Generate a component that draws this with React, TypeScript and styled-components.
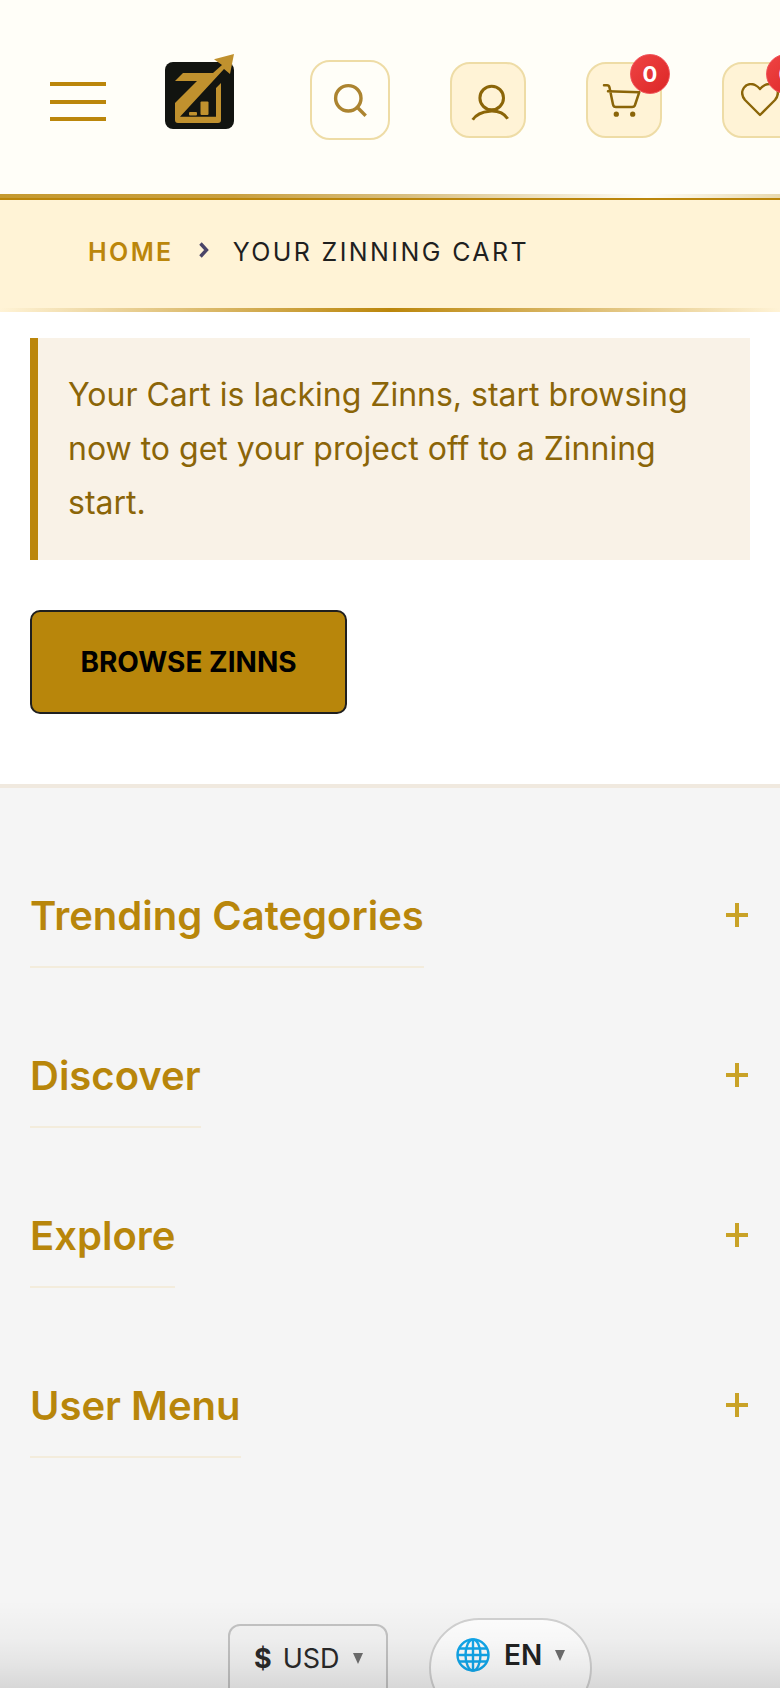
import styled, { createGlobalStyle } from "styled-components";

const GlobalStyle = createGlobalStyle`
	html, body {
		margin: 0;
		padding: 0;
		background: #fff;
		font-family: "Inter", "Liberation Sans", sans-serif;
	}
	* {
		box-sizing: border-box;
	}
`;

const Page = styled.div`
	position: relative;
	width: 780px;
	height: 1688px;
	overflow: hidden;
`;

const Header = styled.header`
	display: flex;
	align-items: center;
	height: 194px;
	padding: 6px 0 0 50px;
	background: #fffef8;
`;

const Burger = styled.div`
	display: flex;
	flex-direction: column;
	gap: 13.5px;
	flex: none;
	width: 56px;
	margin: 3px 59px 0 0;
`;

const BurgerLine = styled.span`
	display: block;
	height: 4px;
	background: #bb860b;
`;

const Logo = styled.svg`
	align-self: flex-start;
	flex: none;
	width: 70px;
	height: 76px;
	margin: 48px 75px 0 0;
`;

const IconButton = styled.div<{ $plain?: boolean }>`
	position: relative;
	flex: none;
	display: flex;
	align-items: center;
	justify-content: center;
	width: ${(p) => (p.$plain ? "80px" : "76px")};
	height: ${(p) => (p.$plain ? "80px" : "76px")};
	margin-right: 60px;
	border: 2px solid #eedca6;
	border-radius: 20px;
	background: ${(p) => (p.$plain ? "#fffef8" : "#fff3d6")};
`;

const Badge = styled.span`
	position: absolute;
	top: -10px;
	right: -10px;
	display: flex;
	align-items: center;
	justify-content: center;
	width: 40px;
	height: 40px;
	border: 1px solid #f0535a;
	border-radius: 50%;
	background: linear-gradient(135deg, #ef4444, #dc2626);
	color: #fff;
	font-size: 22px;
	font-weight: 700;
`;

const HeaderRule = styled.div`
	height: 4px;
	background: linear-gradient(90deg, #c59a30 0%, #c9a040 30%, #d8bf80 52%, #fffef8 83%, #e8d9ae 100%);
`;

const Crumbs = styled.nav`
	display: flex;
	align-items: center;
	height: 114px;
	padding: 0 0 8px 88px;
	border-top: 2px solid #bb860b;
	background: #fff3d6;
	font-size: 25px;
	letter-spacing: 2.4px;
`;

const CrumbLink = styled.span`
	color: #bb860b;
	font-weight: 600;
`;

const CrumbCurrent = styled.span`
	color: #1f1f1f;
`;

const CrumbArrow = styled.svg`
	flex: none;
	width: 14px;
	height: 18px;
	margin: -4px 22px 0 23px;
`;

const CrumbRule = styled.div`
	height: 4px;
	margin-top: -4px;
	background: linear-gradient(90deg, #fff3d6 0%, #bb860b 50%, #fff3d6 100%);
`;

const Main = styled.main`
	padding: 26px 30px 70px;
	background: #fff;
`;

const Notice = styled.div`
	padding: 30px;
	border-left: 8px solid #bb860b;
	background: #f9f2e7;
	color: #8b6508;
	font-size: 32px;
	line-height: 54px;
`;

const BrowseButton = styled.button`
	display: block;
	width: 317px;
	height: 104px;
	margin-top: 50px;
	border: 2px solid #1f1f1f;
	border-radius: 10px;
	background: #b8860b;
	color: #000;
	font-family: inherit;
	font-size: 28px;
	font-weight: 700;
`;

const Footer = styled.footer`
	height: 904px;
	padding: 104px 30px 0;
	border-top: 4px solid #f0e9df;
	background: #f5f5f5;
`;

const Section = styled.div`
	display: flex;
	align-items: flex-start;
	justify-content: space-between;
	height: 160px;

	&:last-child {
		margin-top: 10px;
	}
`;

const SectionTitle = styled.h3`
	margin: 0;
	padding-bottom: 26px;
	border-bottom: 2px solid #f3ecdc;
	color: #b8860b;
	font-size: 40px;
	font-weight: 600;
	line-height: 48px;
`;

const PlusIcon = styled.svg`
	width: 22px;
	height: 24px;
	margin: 11px 2px 0 0;
`;

const Selectors = styled.div`
	position: absolute;
	top: 1618px;
	left: 228px;
	display: flex;
	align-items: flex-start;
	gap: 41px;
`;

const CurrencySelect = styled.div`
	display: flex;
	align-items: center;
	width: 160px;
	height: 100px;
	margin-top: 6px;
	padding: 0 0 32px 24px;
	border: 2px solid #c4c4c4;
	border-radius: 12px;
	background: #f5f5f5;
	color: #2a2a2a;
	font-size: 27px;
`;

const DollarSign = styled.span`
	margin-right: 11px;
	font-weight: 700;
`;

const LanguageSelect = styled.div`
	display: flex;
	align-items: center;
	width: 163px;
	height: 100px;
	padding: 0 0 26px 25px;
	border: 2px solid #d2d2d2;
	border-radius: 50px;
	background: #fff;
	color: #222;
	font-size: 28px;
	font-weight: 600;
`;

const Globe = styled.svg`
	flex: none;
	width: 34px;
	height: 34px;
	margin-right: 14px;
`;

const Caret = styled.span`
	flex: none;
	width: 0;
	height: 0;
	margin-left: 13px;
	border-top: 11px solid #707070;
	border-left: 5.5px solid transparent;
	border-right: 5.5px solid transparent;
`;

const BottomFade = styled.div`
	position: absolute;
	left: 0;
	right: 0;
	bottom: 0;
	height: 88px;
	background: linear-gradient(
		rgba(0, 0, 0, 0) 0%,
		rgba(0, 0, 0, 0.03) 45%,
		rgba(0, 0, 0, 0.07) 74%,
		rgba(0, 0, 0, 0.12) 100%
	);
	pointer-events: none;
`;

const sections = ["Trending Categories", "Discover", "Explore", "User Menu"];

const App = () => {
	return (
		<Page>
			<GlobalStyle />
			<Header>
				<Burger>
					<BurgerLine />
					<BurgerLine />
					<BurgerLine />
				</Burger>
				<Logo viewBox="0 0 70 76">
					<rect x="0" y="8" width="69" height="67" rx="8" fill="#121410" />
					<path
						d="M69 0 L49 5.3 L57 11 L48 19 L18 19 L10 27 L32 27 L10 49 L10 66 Q10 69 13 69 L53 69 Q56 69 56 66 L56 29 L51 34 L51 62.7 L15 62.7 L59 15 L65 20 Z"
						fill="#c0912e"
					/>
					<rect x="24" y="58" width="8" height="3.500" rx="1" fill="#c0912e" />
					<rect x="35.500" y="47.500" width="8" height="13.500" rx="1" fill="#c0912e" />
				</Logo>
				<IconButton $plain>
					<svg width="36" height="36" viewBox="0 0 36 36" fill="none" stroke="#ac8430" strokeWidth="3.400">
						<circle cx="16.300" cy="16.300" r="12.700" />
						<path d="M25.500 25.500 L33.700 33.700" />
					</svg>
				</IconButton>
				<IconButton>
					<svg width="44" height="44" viewBox="0 0 44 44" fill="none" stroke="#8b6508" strokeWidth="3">
						<circle cx="25.700" cy="20" r="11.800" />
						<path d="M6.700 41.800 C13 32 34 29 41.700 40.800" />
					</svg>
				</IconButton>
				<IconButton>
					<svg width="44" height="44" viewBox="0 0 44 44" fill="none" stroke="#8b6508" strokeWidth="2.500" strokeLinecap="round" strokeLinejoin="round">
						<path d="M2 7.200 H5 Q7 7.200 7.500 9.500 L11 26.500 Q11.500 29 14 29 H30 Q32.500 29 33 27 L37.300 14.200 L6 13.200" />
						<circle cx="14.300" cy="36.200" r="1.400" fill="#8b6508" />
						<circle cx="30.700" cy="36.200" r="1.400" fill="#8b6508" />
					</svg>
					<Badge>0</Badge>
				</IconButton>
				<IconButton>
					<svg width="38" height="34" viewBox="0 0 38 34" fill="none" stroke="#8b6508" strokeWidth="2.400" strokeLinejoin="round">
						<path d="M19 32 L4 17 C-3 8 5 -2 14 2 Q17 3.500 19 6 Q21 3.500 24 2 C33 -2 41 8 34 17 Z" />
					</svg>
					<Badge>0</Badge>
				</IconButton>
			</Header>
			<HeaderRule />
			<Crumbs>
				<CrumbLink>HOME</CrumbLink>
				<CrumbArrow viewBox="0 0 14 18" fill="none" stroke="#4a4468" strokeWidth="3.400">
					<path d="M3.500 2.500 L9.500 9 L3.500 15.500" />
				</CrumbArrow>
				<CrumbCurrent>YOUR ZINNING CART</CrumbCurrent>
			</Crumbs>
			<CrumbRule />
			<Main>
				<Notice>Your Cart is lacking Zinns, start browsing now to get your project off to a Zinning start.</Notice>
				<BrowseButton>BROWSE ZINNS</BrowseButton>
			</Main>
			<Footer>
				{sections.map((section) => (
					<Section key={section}>
						<SectionTitle>{section}</SectionTitle>
						<PlusIcon viewBox="0 0 22 24" stroke="#c9a227" strokeWidth="4">
							<path d="M11 0 V24 M0 12 H22" />
						</PlusIcon>
					</Section>
				))}
			</Footer>
			<Selectors>
				<CurrencySelect>
					<DollarSign>$</DollarSign>
					USD
					<Caret />
				</CurrencySelect>
				<LanguageSelect>
					<Globe viewBox="0 0 34 34" fill="none" stroke="#12a8ec" strokeWidth="2.400">
						<circle cx="17" cy="17" r="15.500" />
						<ellipse cx="17" cy="17" rx="7.500" ry="15.500" />
						<path d="M17 1.500 V32.500 M3 10.500 H31 M3 23.500 H31 M1.500 17 H32.500" />
					</Globe>
					EN
					<Caret />
				</LanguageSelect>
			</Selectors>
			<BottomFade />
		</Page>
	);
};

export default App;
